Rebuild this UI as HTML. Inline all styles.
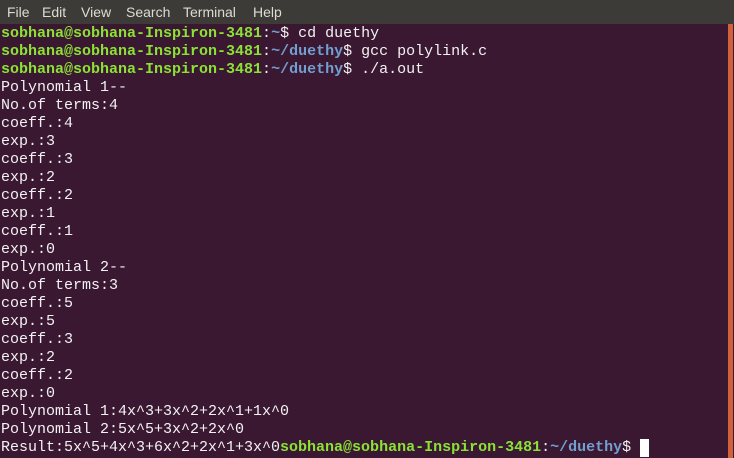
<!DOCTYPE html>
<html><head><meta charset="utf-8"><style>
html,body{margin:0;padding:0;width:734px;height:458px;overflow:hidden;background:#3b1832}
#menu{position:absolute;left:0;top:0;width:734px;height:24px;background:#3c3b37;color:#dfdbd2;font:14px "Liberation Sans",sans-serif}
#menu span{position:absolute;top:4px}
#term{position:absolute;left:1px;top:25px;font:15px/18px "Liberation Mono",monospace;color:#f2f2f2;white-space:pre;margin:0}
.g{color:#8ae234;font-weight:bold}.b{color:#729fcf;font-weight:bold}
#bar{position:absolute;left:728px;top:24px;width:5px;height:434px;background:#d2623b}
#bar2{position:absolute;left:733px;top:24px;width:1px;height:434px;background:#3b1832}
#cur{position:absolute;left:640px;top:439px;width:9px;height:18px;background:#fff}
</style></head><body>
<div id="menu"><span style="left:7px">File</span><span style="left:42px">Edit</span><span style="left:81px">View</span><span style="left:126px">Search</span><span style="left:183px">Terminal</span><span style="left:253px">Help</span></div>
<pre id="term"><span class="g">sobhana@sobhana-Inspiron-3481</span>:<span class="b">~</span>$ cd duethy
<span class="g">sobhana@sobhana-Inspiron-3481</span>:<span class="b">~/duethy</span>$ gcc polylink.c
<span class="g">sobhana@sobhana-Inspiron-3481</span>:<span class="b">~/duethy</span>$ ./a.out
Polynomial 1--
No.of terms:4
coeff.:4
exp.:3
coeff.:3
exp.:2
coeff.:2
exp.:1
coeff.:1
exp.:0
Polynomial 2--
No.of terms:3
coeff.:5
exp.:5
coeff.:3
exp.:2
coeff.:2
exp.:0
Polynomial 1:4x^3+3x^2+2x^1+1x^0
Polynomial 2:5x^5+3x^2+2x^0
Result:5x^5+4x^3+6x^2+2x^1+3x^0<span class="g">sobhana@sobhana-Inspiron-3481</span>:<span class="b">~/duethy</span>$ </pre>
<div id="cur"></div>
<div id="bar"></div><div id="bar2"></div>
</body></html>
